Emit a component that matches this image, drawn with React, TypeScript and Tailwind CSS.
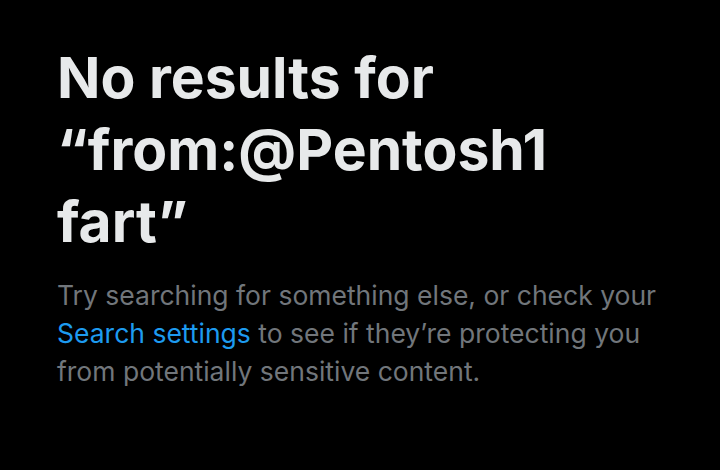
export default function App() {
  return (
    <div className="w-[720px] h-[470px] bg-black overflow-hidden" style={{ fontFamily: 'Inter, sans-serif' }}>
      <div className="ml-[57px] w-[610px] pt-[42px]">
        <h1 className="text-[57px] leading-[72px] font-bold text-[#e7e9ea]">
          No results for “from:@Pentosh1 fart”
        </h1>
        <p className="mt-[18px] text-[26.5px] leading-[38px] text-[#71767b]">
          Try searching for something else, or check your <span className="text-[#1d9bf0]">Search settings</span> to see if they’re protecting you from potentially sensitive content.
        </p>
      </div>
    </div>
  );
}
